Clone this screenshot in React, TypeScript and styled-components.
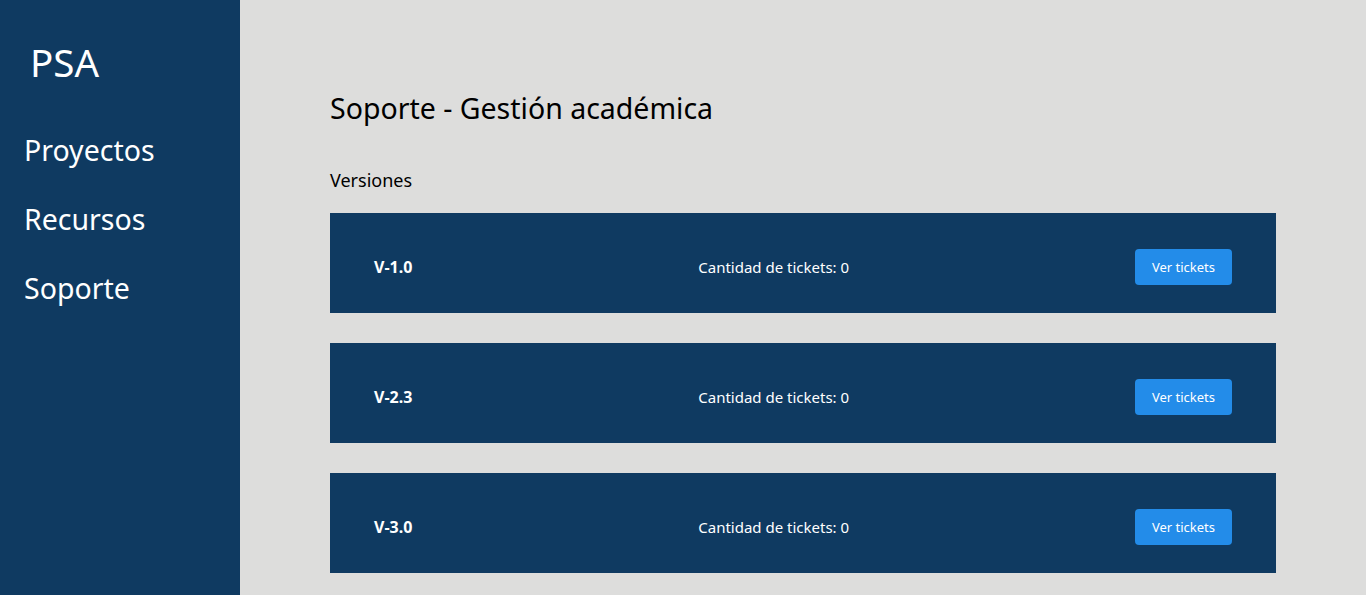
import React from "react";
import styled, { createGlobalStyle } from "styled-components";

const Global = createGlobalStyle`
  html, body { margin: 0; padding: 0; height: 100%; }
  body { font-family: "Noto Sans", "Open Sans", sans-serif; background: #dddddc; }
  #root { height: 100%; }
`;

const Layout = styled.div`
  display: flex;
  min-height: 595px;
  height: 100%;
`;

const Sidebar = styled.nav`
  width: 240px;
  flex-shrink: 0;
  background: #0f3a61;
  color: #ffffff;
  display: flex;
  flex-direction: column;
  padding: 37px 0 0 0;
  box-sizing: border-box;
`;

const Logo = styled.div`
  font-size: 38.5px;
  line-height: 50px;
  padding-left: 30px;
  margin-bottom: 29px;
`;

const NavItem = styled.a`
  font-size: 28.5px;
  line-height: 38px;
  padding: 15px 0 16px 24px;
  color: #ffffff;
  text-decoration: none;
`;

const Main = styled.main`
  flex: 1;
  padding: 88px 90px 0 90px;
  box-sizing: border-box;
`;

const Title = styled.h1`
  margin: 0;
  font-size: 28.5px;
  font-weight: 400;
  line-height: 40px;
  color: #000;
`;

const Subtitle = styled.h2`
  margin: 39px 0 0 0;
  font-size: 18px;
  font-weight: 400;
  line-height: 26px;
  color: #000;
`;

const List = styled.div`
  display: flex;
  flex-direction: column;
  gap: 30px;
  margin-top: 20px;
`;

const Card = styled.div`
  height: 100px;
  background: #0f3a61;
  color: #fff;
  display: flex;
  align-items: center;
  justify-content: space-between;
  padding: 7px 44px 0 44px;
  box-sizing: border-box;
`;

const Version = styled.span`
  font-weight: 700;
  font-size: 16px;
`;

const Count = styled.span`
  font-size: 15px;
`;

const Button = styled.button`
  background: #238ce9;
  color: #fff;
  border: none;
  border-radius: 4px;
  width: 97px;
  height: 36px;
  font-family: inherit;
  font-size: 13px;
  cursor: pointer;
`;

const versions = ["V-1.0", "V-2.3", "V-3.0"];

export default function App() {
  return (
    <>
      <Global />
      <Layout>
        <Sidebar>
          <Logo>PSA</Logo>
          <NavItem>Proyectos</NavItem>
          <NavItem>Recursos</NavItem>
          <NavItem>Soporte</NavItem>
        </Sidebar>
        <Main>
          <Title>Soporte - Gestión académica</Title>
          <Subtitle>Versiones</Subtitle>
          <List>
            {versions.map((v) => (
              <Card key={v}>
                <Version>{v}</Version>
                <Count>Cantidad de tickets: 0</Count>
                <Button>Ver tickets</Button>
              </Card>
            ))}
          </List>
        </Main>
      </Layout>
    </>
  );
}
